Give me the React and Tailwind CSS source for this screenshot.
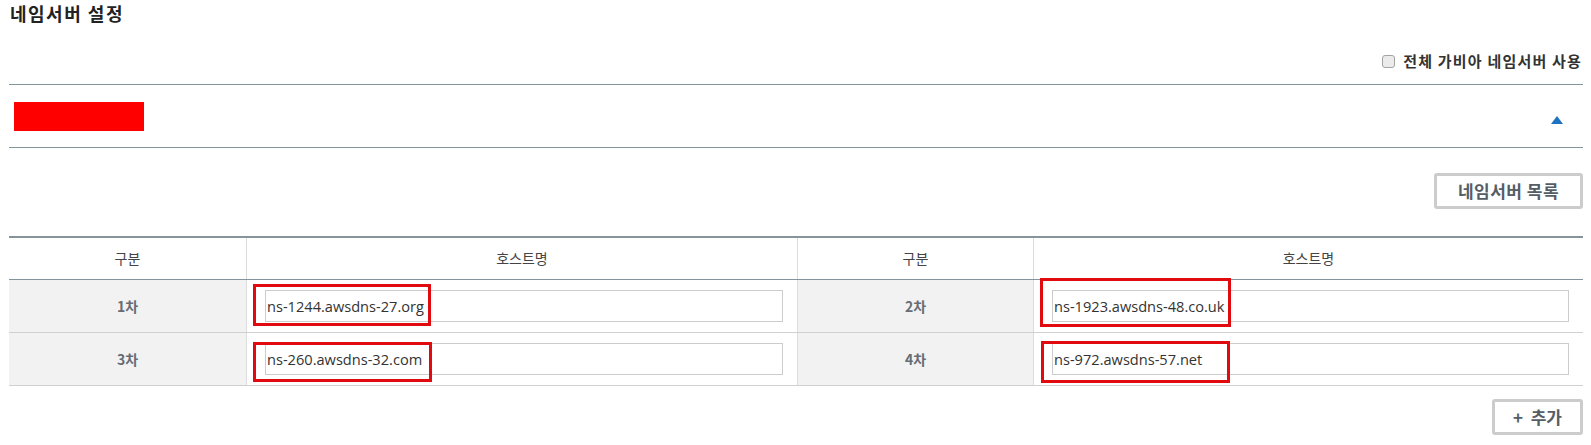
import React from "react";

const KR = { fontFamily: '"Noto Sans CJK KR", "Noto Sans", sans-serif' };

function RedBox({ className }) {
  return (
    <div
      className={"pointer-events-none absolute border-[3px] border-[#e00a0f] " + className}
    />
  );
}

function HostCell({ value, box }) {
  return (
    <div className="relative flex flex-1 items-center border-l border-[#dcdcdc] pl-[18px] pr-[14px]">
      <input
        readOnly
        value={value}
        className="h-[32px] w-full border border-[#cccccc] bg-white pl-[1px] text-[14.6px] text-[#333] outline-none"
        style={{ fontFamily: '"Open Sans", "Noto Sans", sans-serif' }}
      />
      {box}
    </div>
  );
}

function LabelCell({ text, width, first }) {
  return (
    <div
      className={
        "flex items-center justify-center bg-[#f2f2f2] text-[14px] font-bold text-[#666d74] " +
        (first ? "" : "border-l border-[#dcdcdc] ") +
        width
      }
    >
      {text}
    </div>
  );
}

export default function App() {
  return (
    <div className="min-h-[445px] bg-white pl-[9px] pr-[8px]" style={KR}>
      <div className="h-[34px] pl-[1px] pt-[2px] text-[18px] font-bold leading-[22px] tracking-[1.5px] text-[#222]">
        네임서버 설정
      </div>
      <div className="flex h-[50px] items-center justify-end pr-[1px] pt-[4px]">
        <label className="flex items-center gap-[8px] text-[15px] font-bold tracking-[1.2px] text-[#333]">
          <input
            type="checkbox"
            className="h-[13px] w-[13px] appearance-none rounded-[3px] border border-[#a3a3a3] bg-[#ebebeb]"
          />
          전체 가비아 네임서버 사용
        </label>
      </div>

      <div className="flex h-[64px] items-center justify-between border-y border-[#85939a] pl-[5px] pr-[20px]">
        <div className="h-[29px] w-[130px] bg-[#ff0000]" />
        <svg width="12" height="8" viewBox="0 0 12 8" className="mt-[7px]">
          <polygon points="6,0 12,8 0,8" fill="#1d72c2" />
        </svg>
      </div>

      <div className="mt-[25px] flex justify-end">
        <button className="h-[36px] w-[149px] rounded-[3px] border-[3px] border-[#cccccc] bg-white text-[17px] font-bold tracking-[0.5px] text-[#555d66]">
          네임서버 목록
        </button>
      </div>

      <div className="mt-[27px] border-t-2 border-[#85939a]">
        <div className="flex h-[42px] border-b border-[#85939a] text-[14px] text-[#444]">
          <div className="flex w-[237px] items-center justify-center">구분</div>
          <div className="flex w-[551px] items-center justify-center border-l border-[#dcdcdc]">호스트명</div>
          <div className="flex w-[236px] items-center justify-center border-l border-[#dcdcdc]">구분</div>
          <div className="flex flex-1 items-center justify-center border-l border-[#dcdcdc]">호스트명</div>
        </div>

        <div className="flex h-[53px] border-b border-[#d0d0d0]">
          <LabelCell text="1차" width="w-[237px]" first />
          <div className="flex w-[551px]">
            <HostCell
              value="ns-1244.awsdns-27.org"
              box={<RedBox className="left-[6px] top-[4px] h-[42px] w-[178px]" />}
            />
          </div>
          <LabelCell text="2차" width="w-[236px]" />
          <HostCell
            value="ns-1923.awsdns-48.co.uk"
            box={<RedBox className="left-[6px] top-[-2px] h-[49px] w-[191px]" />}
          />
        </div>

        <div className="flex h-[53px] border-b border-[#d0d0d0]">
          <LabelCell text="3차" width="w-[237px]" first />
          <div className="flex w-[551px]">
            <HostCell
              value="ns-260.awsdns-32.com"
              box={<RedBox className="left-[6px] top-[9px] h-[40px] w-[179px]" />}
            />
          </div>
          <LabelCell text="4차" width="w-[236px]" />
          <HostCell
            value="ns-972.awsdns-57.net"
            box={<RedBox className="left-[7px] top-[8px] h-[42px] w-[189px]" />}
          />
        </div>
      </div>

      <div className="mt-[13px] flex justify-end">
        <button className="h-[36px] w-[91px] rounded-[3px] border-[3px] border-[#cccccc] bg-white text-[17px] font-bold text-[#555d66]">
          +&nbsp; 추가
        </button>
      </div>
    </div>
  );
}
